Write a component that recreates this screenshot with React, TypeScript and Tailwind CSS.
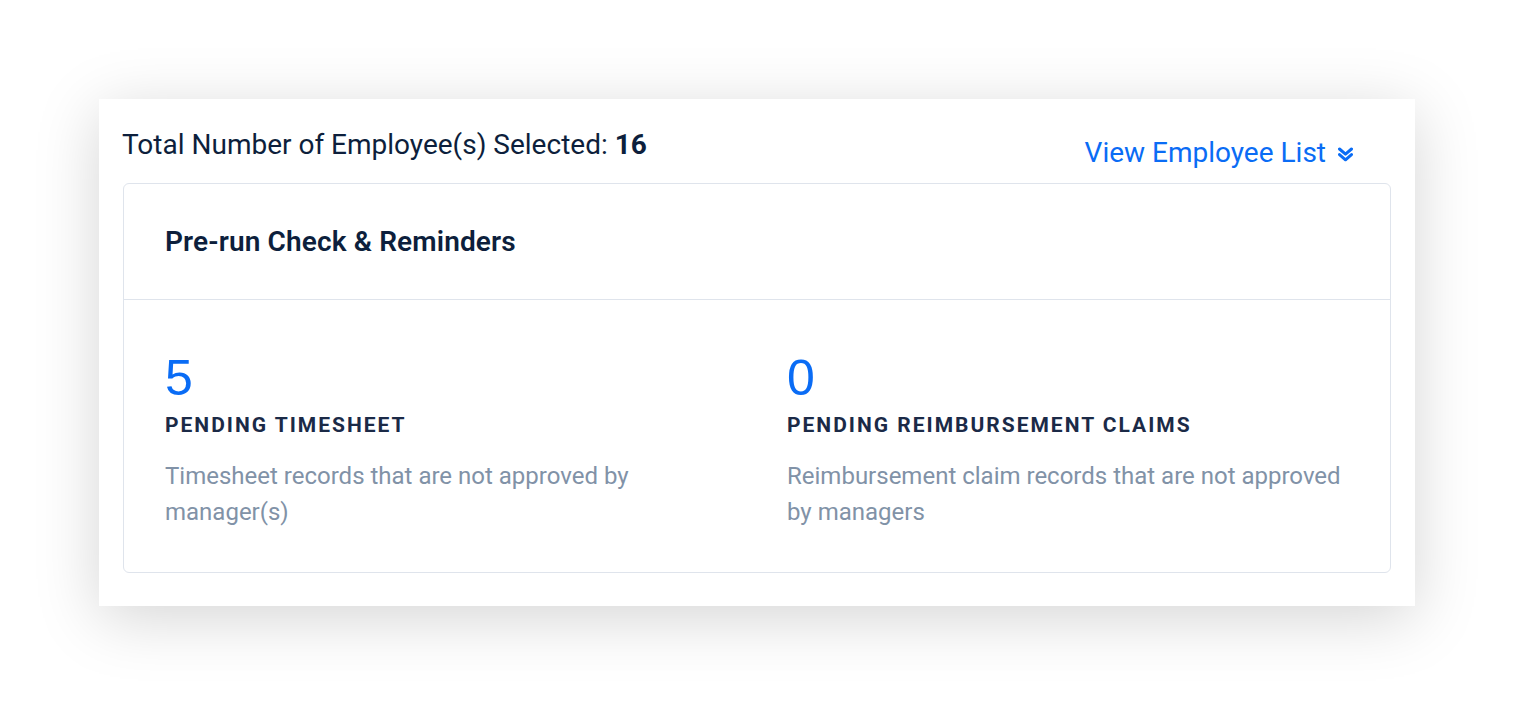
import React from 'react';

const stats = [
  {
    count: 5,
    label: 'Pending Timesheet',
    note: 'Timesheet records that are not approved by manager(s)',
  },
  {
    count: 0,
    label: 'Pending Reimbursement Claims',
    note: 'Reimbursement claim records that are not approved by managers',
  },
];

const ChevronsDown: React.FC = () => (
  <svg width="15" height="18" viewBox="0 0 15 18" fill="none" stroke="currentColor" strokeWidth="3" strokeLinecap="round" strokeLinejoin="round">
    <path d="M1.5 5l6 5.2 6-5.2" />
    <path d="M1.5 10.6l6 5.2 6-5.2" />
  </svg>
);

const App: React.FC = () => {
  return (
    <div className="min-h-screen bg-white pt-[99px] pl-[99px] font-['Roboto',sans-serif]">
      <div className="w-[1316px] h-[507px] bg-white shadow-[0_12px_60px_rgba(0,0,0,0.17)] px-[24px] pt-[28px]">
        {/* Header row */}
        <div className="flex justify-between items-start h-[56px]">
          <p className="text-[28px] leading-[36px] text-[#0d1f3c] -ml-px">
            Total Number of Employee(s) Selected: <span className="font-bold">16</span>
          </p>
          <button className="mt-[8px] mr-[38px] flex items-center gap-[12px] text-[28px] leading-[36px] text-[#0a6cf5]">
            <span>View Employee List</span>
            <ChevronsDown />
          </button>
        </div>

        {/* Reminders card */}
        <div className="border border-[#dfe4ec] rounded-[6px]">
          <div className="h-[116px] flex items-center px-[41px] border-b border-[#dfe4ec]">
            <h2 className="text-[28px] leading-[36px] font-semibold text-[#0d1f3c] tracking-[0.005em]">Pre-run Check &amp; Reminders</h2>
          </div>
          <div className="grid grid-cols-2 gap-[60px] px-[41px] pt-[50px] pb-[42px]">
            {stats.map((s) => (
              <div key={s.label}>
                <div className="text-[50px] leading-[56px] text-[#0a6cf5] font-['Liberation_Sans',sans-serif]">{s.count}</div>
                <div className="mt-[5px] text-[21px] leading-[28px] font-bold uppercase tracking-[0.095em] text-[#1b2a47]">
                  {s.label}
                </div>
                <p className="mt-[19px] text-[24px] leading-[36px] text-[#8192a7]">{s.note}</p>
              </div>
            ))}
          </div>
        </div>
      </div>
    </div>
  );
};

export default App;
